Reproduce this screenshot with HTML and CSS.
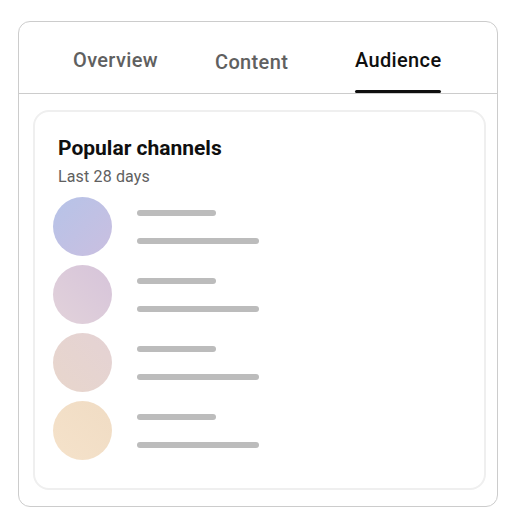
FILE: index.html
```html
<!DOCTYPE html>
<html lang="en">
<head>
    <meta charset="UTF-8">
    <meta name="viewport" content="width=device-width, initial-scale=1.0">
    <title>Audience - Popular channels</title>
    <link rel="stylesheet" href="styles.css">
</head>
<body>
    <div class="panel">
        <div class="tabs">
            <div class="tab tab-overview">
                <span class="tab-label">Overview</span>
            </div>
            <div class="tab tab-content">
                <span class="tab-label">Content</span>
            </div>
            <div class="tab active">
                <span class="tab-label">Audience</span>
                <span class="tab-line"></span>
            </div>
        </div>

        <div class="card">
            <h2 class="card-title">Popular channels</h2>
            <div class="card-sub">Last 28 days</div>
            <div class="channel-list">
                <div class="channel">
                    <div class="avatar avatar-1"></div>
                    <div class="placeholder">
                        <span class="bar bar-short"></span>
                        <span class="bar bar-long"></span>
                    </div>
                </div>
                <div class="channel">
                    <div class="avatar avatar-2"></div>
                    <div class="placeholder">
                        <span class="bar bar-short"></span>
                        <span class="bar bar-long"></span>
                    </div>
                </div>
                <div class="channel">
                    <div class="avatar avatar-3"></div>
                    <div class="placeholder">
                        <span class="bar bar-short"></span>
                        <span class="bar bar-long"></span>
                    </div>
                </div>
                <div class="channel">
                    <div class="avatar avatar-4"></div>
                    <div class="placeholder">
                        <span class="bar bar-short"></span>
                        <span class="bar bar-long"></span>
                    </div>
                </div>
            </div>
        </div>
    </div>
</body>
</html>
```

FILE: styles.css
```css
body {
    margin: 0;
    padding: 21px 0 0 18px;
    background-color: #ffffff;
    font-family: Roboto, "Liberation Sans", Arial, sans-serif;
    color: #0f0f0f;
}
.panel {
    width: 480px;
    height: 486px;
    box-sizing: border-box;
    border: 1px solid #cccccc;
    border-radius: 12px;
    display: flex;
    flex-direction: column;
    background-color: #ffffff;
}
.tabs {
    height: 71px;
    display: flex;
    padding-left: 54px;
    border-bottom: 1px solid #cccccc;
}
.tab {
    display: flex;
    flex-direction: column;
    align-items: stretch;
    padding-top: 26px;
    box-sizing: border-box;
    height: 71px;
}
.tab-overview {
    width: 142px;
}
.tab-content {
    width: 140px;
    padding-top: 28px;
}
.tab-label {
    font-size: 20px;
    line-height: 24px;
    font-weight: 500;
    letter-spacing: 0.35px;
    color: #606060;
    white-space: nowrap;
}
.tab.active .tab-label {
    color: #0f0f0f;
}
.tab-line {
    margin-top: auto;
    height: 3px;
    border-radius: 2px;
    background-color: #0f0f0f;
}
.card {
    flex: 1;
    margin: 16px 11px 16px 14px;
    border: 2px solid #efefef;
    border-radius: 16px;
    padding: 24px 18px;
}
.card-title {
    margin: 0 0 0 5px;
    font-size: 21px;
    line-height: 24px;
    font-weight: 700;
}
.card-sub {
    margin: 7px 0 0 5px;
    font-size: 16px;
    line-height: 20px;
    letter-spacing: 0.15px;
    color: #606060;
}
.channel-list {
    margin-top: 10px;
    display: flex;
    flex-direction: column;
    gap: 9px;
}
.channel {
    display: flex;
    align-items: center;
    gap: 25px;
}
.avatar {
    width: 59px;
    height: 59px;
    border-radius: 50%;
    flex-shrink: 0;
}
.avatar-1 {
    background: linear-gradient(135deg, #b6c3e8, #cabfe0);
}
.avatar-2 {
    background: linear-gradient(45deg, #e2d2da, #d6c4da);
}
.avatar-3 {
    background: linear-gradient(45deg, #e8d6cc, #e4d2d4);
}
.avatar-4 {
    background: linear-gradient(45deg, #f5e2ca, #f0dcc4);
}
.placeholder {
    display: flex;
    flex-direction: column;
    gap: 22px;
}
.bar {
    display: block;
    height: 6px;
    border-radius: 3px;
    background-color: #bcbcbc;
}
.bar-short {
    width: 79px;
}
.bar-long {
    width: 122px;
}
```
